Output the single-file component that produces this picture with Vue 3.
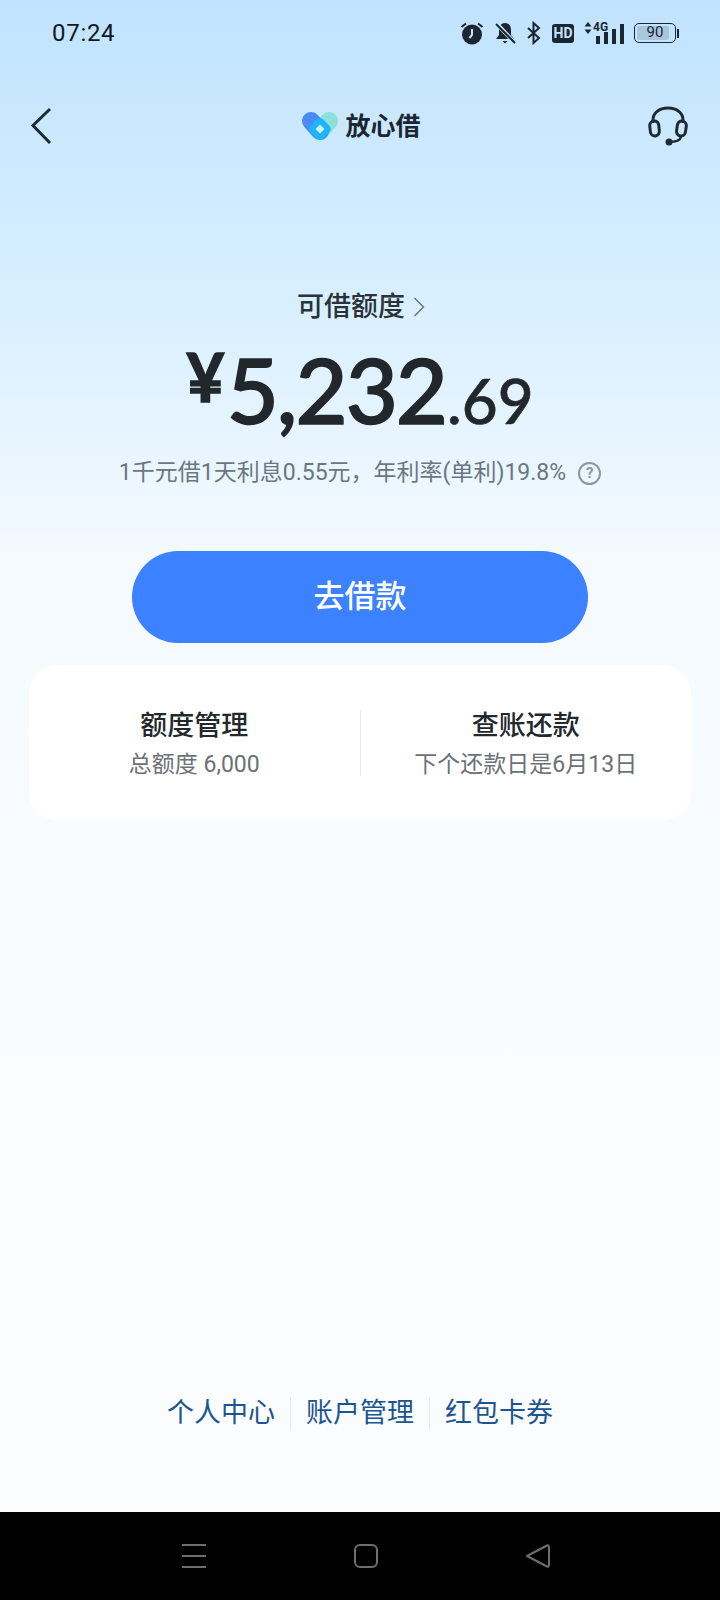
<script setup>
const entries = [
  { title: '额度管理', sub: '总额度 6,000' },
  { title: '查账还款', sub: '下个还款日是6月13日' },
]
const links = ['个人中心', '账户管理', '红包卡券']
</script>

<template>
  <div class="page">
    <div class="status">
      <span class="time">07:24</span>
      <div class="status-icons">
        <svg width="24" height="24" viewBox="0 0 24 24">
          <circle cx="12" cy="13.5" r="10" fill="#1c2630" />
          <path d="M12 8v6l-2.5 3" fill="none" stroke="#c3e4ff" stroke-width="2" />
          <path d="M1.5 6 6 2.5M22.5 6 18 2.500" stroke="#1c2630" stroke-width="2" />
        </svg>
        <svg width="22" height="24" viewBox="0 0 22 24">
          <path d="M11 2c-4 0-6 3-6 7v5l-3 4h18l-3-4V9c0-4-2-7-6-7zM8.500 20h5L11 22.500z" fill="#1c2630" />
          <path d="M2 2l19 20" stroke="#c3e4ff" stroke-width="4" />
          <path d="M2 3l19 19" stroke="#1c2630" stroke-width="2" />
        </svg>
        <svg width="16" height="24" viewBox="0 0 16 24">
          <path d="M2 7l11 10-5.500 5V2L13 7 2 17" fill="none" stroke="#1c2630" stroke-width="2" />
        </svg>
        <span class="hd">HD</span>
        <div class="net">
          <svg class="arrows" width="8" height="12" viewBox="0 0 8 12">
            <path d="M4 0l3.500 4.500h-7zM4 12L.5 7.500h7z" fill="#1c2630" />
          </svg>
          <span class="g4">4G</span>
          <span class="bars">
            <i class="b1"></i><i class="b2"></i><i class="b3"></i><i class="b4"></i>
          </span>
        </div>
        <div class="battery">
          <div class="battery-body"><span class="level"></span><span class="pct">90</span></div>
          <span class="cap"></span>
        </div>
      </div>
    </div>

    <div class="nav">
      <svg class="back" width="24" height="38" viewBox="0 0 24 38">
        <path d="M20 2 3 18.500 20 36" fill="none" stroke="#1f2a33" stroke-width="3" />
      </svg>
      <div class="brand">
        <svg width="38" height="30" viewBox="0 0 38 30">
          <path d="M28 10 19 20" stroke="#8fe0d8" stroke-width="18" stroke-linecap="round" />
          <path d="M10 10 19 20" stroke="#4a8bf5" stroke-width="18" stroke-linecap="round" />
          <rect x="10" y="9" width="18" height="18" rx="5" fill="#1cb7fb" transform="rotate(45 19 18)" />
          <path d="M19 13.500l4.500 4.500-4.500 4.500-4.500-4.500z" fill="#d4f1ff" />
        </svg>
        <span class="brand-name">放心借</span>
      </div>
      <svg class="service" width="40" height="40" viewBox="0 0 40 40">
        <path d="M5 17v-3C5 7 11 2 20 2s15 5 15 12v3" fill="none" stroke="#1f2a33" stroke-width="3" />
        <rect x="2" y="15" width="9" height="15" rx="4.500" fill="none" stroke="#1f2a33" stroke-width="3" transform="rotate(-6 6 22)" />
        <rect x="29" y="15" width="9" height="15" rx="4.500" fill="none" stroke="#1f2a33" stroke-width="3" transform="rotate(8 33 22)" />
        <path d="M33 31c-1 4-6 5-12 5" fill="none" stroke="#1f2a33" stroke-width="2.500" />
        <circle cx="21" cy="36" r="3.500" fill="#1f2a33" />
      </svg>
    </div>

    <div class="hero">
      <div class="label">
        <span>可借额度</span>
        <svg width="12" height="20" viewBox="0 0 12 20">
          <path d="M1.500 1 10.500 10 1.500 19" fill="none" stroke="#5f6b75" stroke-width="1.300" />
        </svg>
      </div>
      <div class="amount">
        <span class="yen">¥</span><span class="whole">5,232</span><span class="cents">.69</span>
      </div>
      <div class="rate">
        <span>1千元借1天利息0.55元，年利率(单利)19.8%</span>
        <span class="help">?</span>
      </div>
      <button class="borrow"><span class="borrow-text">去借款</span></button>
    </div>

    <div class="card">
      <div v-for="entry in entries" :key="entry.title" class="card-item">
        <div class="card-title">{{ entry.title }}</div>
        <div class="card-sub">{{ entry.sub }}</div>
      </div>
    </div>

    <div class="links">
      <span v-for="link in links" :key="link" class="link">{{ link }}</span>
    </div>

    <div class="sysbar">
      <svg width="26" height="26" viewBox="0 0 26 26">
        <path d="M1 2h24M1 13h24M1 24h24" stroke="#6e6e6e" stroke-width="2" />
      </svg>
      <svg width="26" height="26" viewBox="0 0 26 26">
        <rect x="2" y="2" width="22" height="22" rx="5" fill="none" stroke="#6e6e6e" stroke-width="2" />
      </svg>
      <svg width="26" height="26" viewBox="0 0 26 26">
        <path d="M2 13 22 2.500c1-.5 2 0 2 1.500v18c0 1.500-1 2-2 1.500z" fill="none" stroke="#6e6e6e" stroke-width="2" stroke-linejoin="round" />
      </svg>
    </div>
  </div>
</template>

<style scoped>
.page {
  width: 720px;
  height: 1600px;
  display: flex;
  flex-direction: column;
  font-family: Roboto, "Noto Sans CJK SC", sans-serif;
  color: #22272c;
  background: linear-gradient(180deg, #c0e3ff 0, #d8efff 300px, #f4faff 560px, #f9fcff 900px, #fbfdfe 100%);
}

.status {
  height: 66px;
  padding: 0 41px 0 52px;
  display: flex;
  align-items: center;
  justify-content: space-between;
}

.time {
  font-size: 24px;
  letter-spacing: 0.7px;
  color: #10181f;
}

.status-icons {
  display: flex;
  align-items: center;
  gap: 10px;
}

.hd {
  width: 22px;
  height: 19px;
  border-radius: 3px;
  background: #1c2630;
  color: #c3e4ff;
  font-size: 14px;
  font-weight: 700;
  line-height: 19px;
  text-align: center;
}

.net {
  position: relative;
  width: 40px;
  height: 24px;
}

.arrows {
  position: absolute;
  left: 0;
  top: 1px;
}

.g4 {
  position: absolute;
  left: 9px;
  top: -1px;
  font-size: 12px;
  font-weight: 700;
  line-height: 14px;
  color: #1c2630;
}

.bars {
  position: absolute;
  right: 0;
  bottom: 1px;
  display: flex;
  align-items: flex-end;
  gap: 4px;
}

.bars i {
  width: 4px;
  background: #1c2630;
}

.b1 { height: 8px; }
.b2 { height: 12px; }
.b3 { height: 15px; }
.b4 { height: 20px; }

.battery {
  display: flex;
  align-items: center;
  gap: 1px;
}

.battery-body {
  position: relative;
  width: 42px;
  height: 20px;
  border: 1.500px solid #1c2630;
  border-radius: 5px;
  box-sizing: border-box;
  padding: 2px;
}

.level {
  display: block;
  width: 90%;
  height: 100%;
  border-radius: 2px;
  background: #a9c6df;
}

.pct {
  position: absolute;
  inset: 0;
  text-align: center;
  font-size: 15px;
  line-height: 17px;
  color: #1c2630;
}

.cap {
  width: 2px;
  height: 9px;
  background: #1c2630;
}

.nav {
  height: 52px;
  margin-top: 34px;
  padding: 0 32px 0 30px;
  display: grid;
  grid-template-columns: 1fr auto 1fr;
  align-items: center;
}

.service {
  justify-self: end;
}

.brand {
  margin-left: 4px;
  display: flex;
  align-items: center;
  gap: 6px;
}

.brand-name {
  margin-top: -4px;
  font-size: 25px;
  font-weight: 700;
  color: #1c2630;
}

.hero {
  display: flex;
  flex-direction: column;
  align-items: center;
}

.label {
  margin-top: 137px;
  margin-left: 2px;
  display: flex;
  align-items: center;
  gap: 8px;
  font-size: 27px;
  font-weight: 500;
  line-height: 36px;
  color: #2a323a;
}

.amount {
  margin-top: 10px;
  display: flex;
  align-items: baseline;
  height: 108px;
  line-height: 108px;
  font-family: Lato, Roboto, sans-serif;
  color: #22272c;
  -webkit-text-stroke: 1.5px #22272c;
}

.yen {
  font-size: 66px;
  font-weight: 700;
  align-self: flex-start;
  line-height: 68px;
  margin-top: 8px;
  margin-right: 2px;
}

.whole {
  font-size: 90px;
  font-weight: 500;
  letter-spacing: -2px;
}

.cents {
  font-size: 62px;
  font-weight: 500;
  margin-left: 1px;
  letter-spacing: 0;
  -webkit-text-stroke: 0.6px #22272c;
}

.rate {
  margin-top: 13px;
  display: flex;
  align-items: center;
  gap: 12px;
  font-size: 23px;
  line-height: 34px;
  color: #6a7680;
}

.help {
  width: 19px;
  height: 19px;
  border: 2px solid #8c979f;
  border-radius: 50%;
  font-size: 15px;
  font-weight: 700;
  line-height: 19px;
  text-align: center;
  color: #8c979f;
}

.borrow {
  margin-top: 61px;
  width: 456px;
  height: 92px;
  border: 0;
  border-radius: 46px;
  background: #3c81ff;
  color: #fff;
  font-family: inherit;
  font-size: 31px;
  font-weight: 500;
}

.borrow-text {
  display: block;
  margin-top: -7px;
}

.card {
  margin: 22px 29px 0;
  height: 155px;
  border-radius: 28px;
  background: #fff;
  display: flex;
  align-items: center;
}

.card-item {
  flex: 1;
  height: 66px;
  display: flex;
  flex-direction: column;
  align-items: center;
}

.card-item + .card-item {
  border-left: 1px solid #e6e8ea;
}

.card-title {
  margin-top: -1px;
  font-size: 27px;
  font-weight: 500;
  line-height: 34px;
  color: #23282d;
}

.card-sub {
  margin-top: 6px;
  font-size: 23px;
  line-height: 32px;
  color: #6b7177;
}

.links {
  margin-top: auto;
  height: 115px;
  display: flex;
  justify-content: center;
}

.link {
  height: 32px;
  padding: 0 15px;
  font-size: 27px;
  line-height: 32px;
  color: #1c5590;
}

.link + .link {
  border-left: 1px solid #e6e8ea;
}

.sysbar {
  height: 88px;
  background: #000;
  padding: 0 169px 0 181px;
  display: flex;
  align-items: center;
  justify-content: space-between;
}
</style>

<style>
body {
  margin: 0;
}
</style>
